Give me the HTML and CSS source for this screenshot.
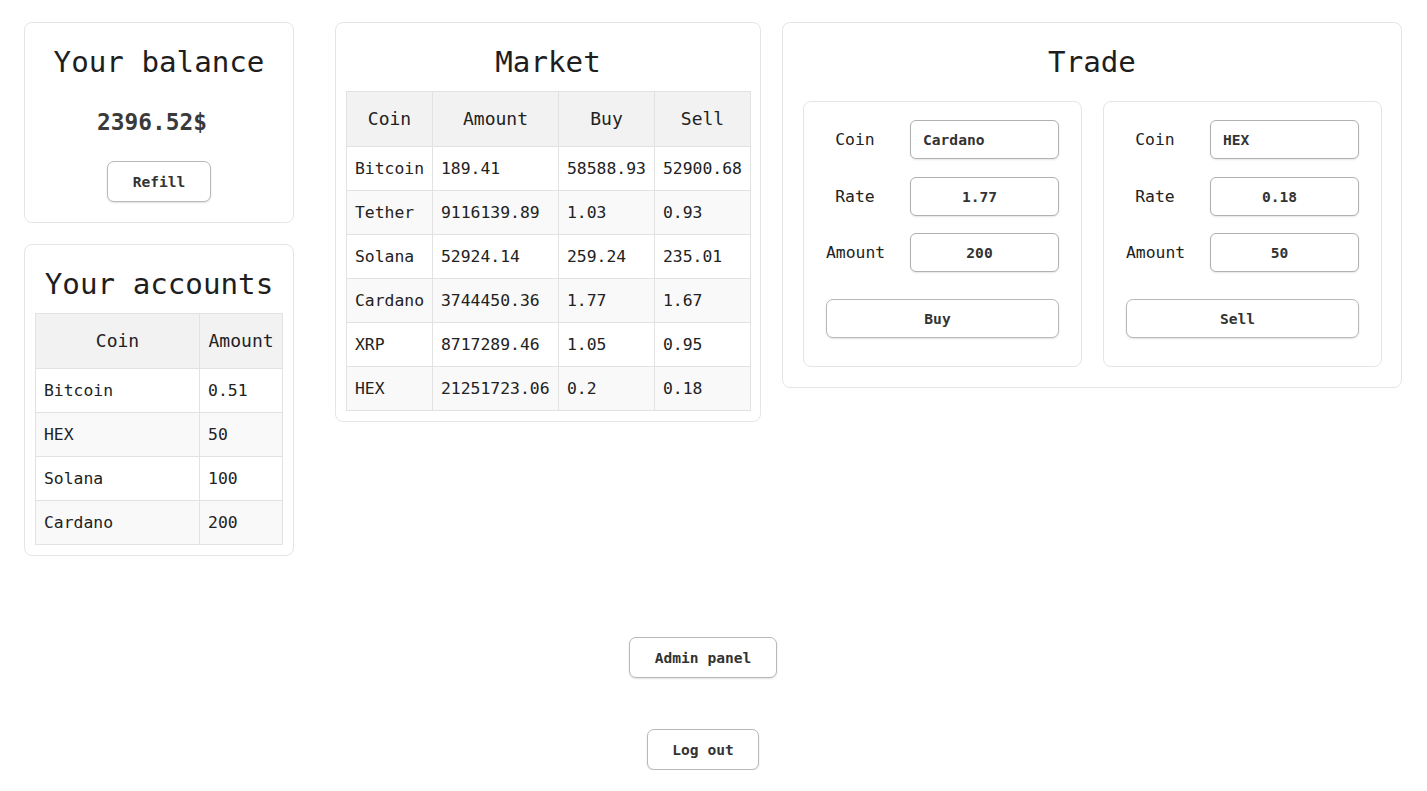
FILE: index.html
```html
<!DOCTYPE html>
<html lang="en">
<head>
<meta charset="utf-8">
<title>Crypto exchange</title>
<link rel="stylesheet" href="styles.css">
</head>
<body>
<main class="layout">
  <div class="left-col">
    <section class="card balance-card">
      <h2 class="card-title">Your balance</h2>
      <div class="balance">2396.52$</div>
      <button class="btn">Refill</button>
    </section>
    <section class="card">
      <h2 class="card-title">Your accounts</h2>
      <table class="grid-table accounts">
        <thead><tr><th class="c-coin">Coin</th><th class="c-amt">Amount</th></tr></thead>
        <tbody>
          <tr><td>Bitcoin</td><td>0.51</td></tr>
          <tr><td>HEX</td><td>50</td></tr>
          <tr><td>Solana</td><td>100</td></tr>
          <tr><td>Cardano</td><td>200</td></tr>
        </tbody>
      </table>
    </section>
  </div>

  <section class="card market-card">
    <h2 class="card-title">Market</h2>
    <table class="grid-table market">
      <thead><tr><th class="m1">Coin</th><th class="m2">Amount</th><th class="m3">Buy</th><th class="m4">Sell</th></tr></thead>
      <tbody>
        <tr><td>Bitcoin</td><td>189.41</td><td>58588.93</td><td>52900.68</td></tr>
        <tr><td>Tether</td><td>9116139.89</td><td>1.03</td><td>0.93</td></tr>
        <tr><td>Solana</td><td>52924.14</td><td>259.24</td><td>235.01</td></tr>
        <tr><td>Cardano</td><td>3744450.36</td><td>1.77</td><td>1.67</td></tr>
        <tr><td>XRP</td><td>8717289.46</td><td>1.05</td><td>0.95</td></tr>
        <tr><td>HEX</td><td>21251723.06</td><td>0.2</td><td>0.18</td></tr>
      </tbody>
    </table>
  </section>

  <section class="card trade-card">
    <h2 class="card-title">Trade</h2>
    <div class="trade-panels">
      <form class="panel">
        <div class="form-grid">
          <label class="lbl">Coin</label><input class="field field-left" value="Cardano" readonly>
          <label class="lbl">Rate</label><input class="field" value="1.77" readonly>
          <label class="lbl">Amount</label><input class="field" value="200">
        </div>
        <button type="button" class="btn btn-wide">Buy</button>
      </form>
      <form class="panel">
        <div class="form-grid">
          <label class="lbl">Coin</label><input class="field field-left" value="HEX" readonly>
          <label class="lbl">Rate</label><input class="field" value="0.18" readonly>
          <label class="lbl">Amount</label><input class="field" value="50">
        </div>
        <button type="button" class="btn btn-wide">Sell</button>
      </form>
    </div>
  </section>
</main>

<footer class="footer">
  <button class="btn">Admin panel</button>
  <button class="btn">Log out</button>
</footer>
</body>
</html>
```

FILE: styles.css
```css
* { box-sizing: border-box; }

html, body {
  margin: 0;
  padding: 0;
  background: #ffffff;
}

body {
  font-family: "DejaVu Sans Mono", "Liberation Mono", monospace;
  color: #222;
  font-size: 16.4px;
}

.layout {
  display: flex;
  align-items: flex-start;
  padding: 22px 25px 0 24px;
}

.left-col {
  width: 270px;
  display: flex;
  flex-direction: column;
  gap: 21px;
}

.card {
  background: #fff;
  border: 1px solid #e5e5e5;
  border-radius: 8px;
  padding: 0 10px 10px;
}

.card-title {
  margin: 21px 0 11px;
  font-size: 29.2px;
  font-weight: normal;
  line-height: 36px;
  text-align: center;
  color: #1e1e1e;
}

.balance-card {
  display: flex;
  flex-direction: column;
  align-items: center;
  padding-bottom: 20px;
}

.balance-card .card-title { margin-bottom: 27px; }

.balance {
  font-size: 22.8px;
  font-weight: bold;
  line-height: 30px;
  color: #3a3a3a;
  margin-bottom: 24px;
  padding-right: 14px;
}

.btn {
  font-family: "DejaVu Sans Mono", "Liberation Mono", monospace;
  font-size: 14.6px;
  font-weight: bold;
  color: #333;
  background: #fff;
  border: 1px solid #b8b8b8;
  border-radius: 7px;
  height: 41px;
  padding: 0 24.5px;
  box-shadow: 0 1px 2px rgba(0, 0, 0, 0.12);
  cursor: pointer;
}

.grid-table {
  width: 100%;
  border-collapse: collapse;
  font-size: 16.4px;
}

.grid-table th,
.grid-table td {
  border: 1px solid #e2e2e2;
  text-align: left;
  white-space: nowrap;
}

.grid-table th {
  background: #f2f2f2;
  font-weight: normal;
  font-size: 18px;
  text-align: center;
  padding: 16px 4px;
  line-height: 22px;
}

.grid-table td {
  padding: 11px 8px;
  line-height: 21px;
}

.grid-table tbody tr:nth-child(even) td { background: #f9f9f9; }

.accounts .c-coin { width: 165px; }
.accounts .c-amt { width: 83px; }

.market-card {
  width: 426px;
  margin-left: 41px;
}

.market { table-layout: fixed; }
.market .m1 { width: 86px; }
.market .m2 { width: 126px; }
.market .m3 { width: 96px; }
.market .m4 { width: 96px; }

.trade-card {
  width: 620px;
  margin-left: 21px;
  padding: 0 20px 20px;
}

.trade-card .card-title { margin-bottom: 21px; }

.trade-panels {
  display: flex;
  gap: 21px;
}

.panel {
  width: 279px;
  margin: 0;
  border: 1px solid #e5e5e5;
  border-radius: 8px;
  padding: 18px 22px 28px;
}

.form-grid {
  display: grid;
  grid-template-columns: 58px 149px;
  column-gap: 26px;
  row-gap: 17.5px;
  align-items: center;
}

.lbl {
  text-align: center;
  white-space: nowrap;
  font-size: 16.4px;
  color: #222;
}

.field {
  width: 149px;
  height: 39px;
  border: 1px solid #b0b0b0;
  border-radius: 6px;
  box-shadow: 0 1px 2px rgba(0, 0, 0, 0.1);
  font-family: "DejaVu Sans Mono", "Liberation Mono", monospace;
  font-size: 14.6px;
  font-weight: bold;
  color: #333;
  text-align: center;
  padding: 0 10px 0 0;
  background: #fff;
  outline: none;
}

.field-left {
  text-align: left;
  padding: 0 10px 0 12px;
}

.btn-wide {
  display: block;
  width: 233px;
  height: 39px;
  margin-top: 27px;
  padding: 0 10px 0 0;
}

.footer {
  display: flex;
  flex-direction: column;
  align-items: center;
  gap: 51px;
  padding: 0 21px 0 0;
  margin-top: 81px;
}
```
